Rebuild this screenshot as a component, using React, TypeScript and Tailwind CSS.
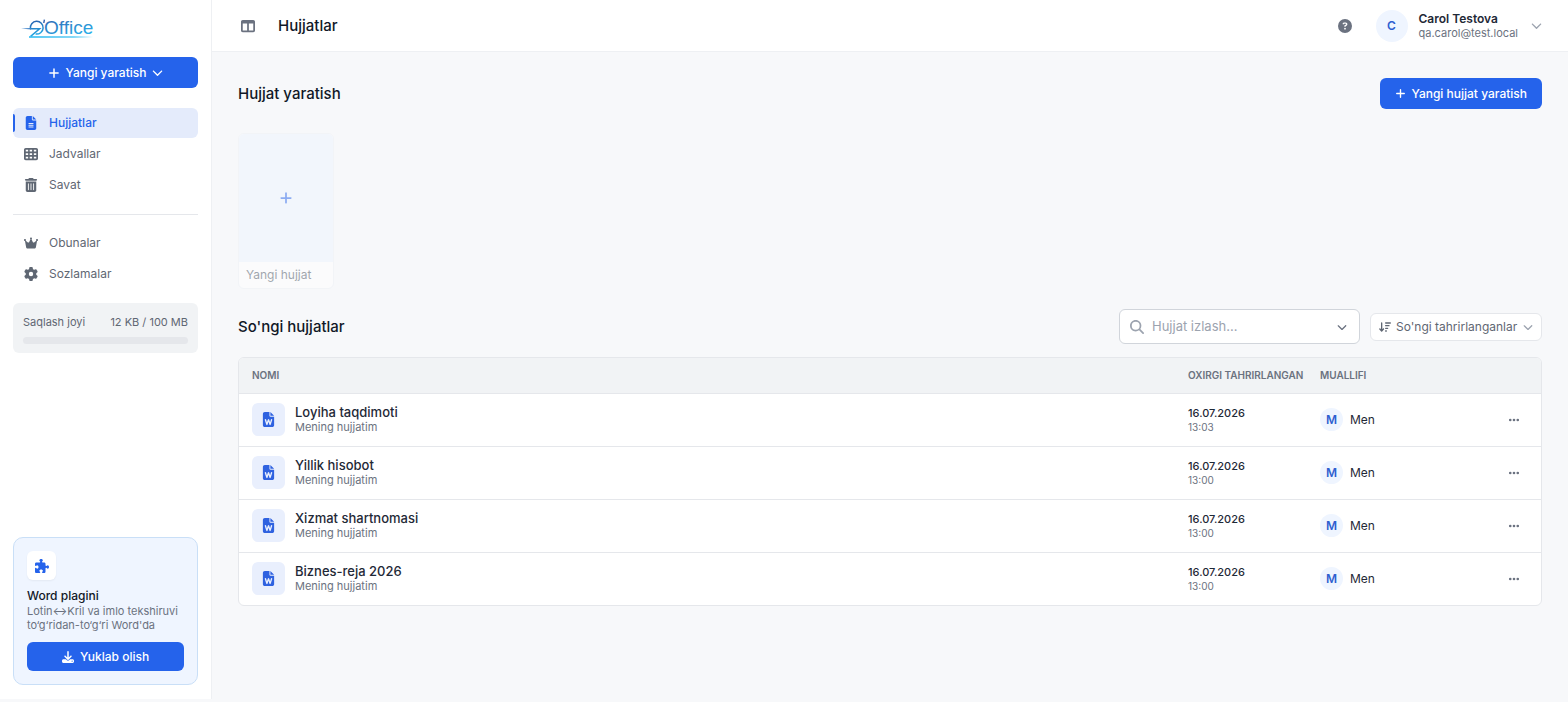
import {
  FaArrowDownWideShort,
  FaChevronDown,
  FaCircleQuestion,
  FaCrown,
  FaDownload,
  FaEllipsis,
  FaFileLines,
  FaFileWord,
  FaGear,
  FaMagnifyingGlass,
  FaPlus,
  FaPuzzlePiece,
  FaTableCells,
  FaTableColumns,
  FaTrashCan,
} from "react-icons/fa6";

const mainItems = [
  { id: "docs", label: "Hujjatlar", icon: FaFileLines, active: true },
  { id: "sheets", label: "Jadvallar", icon: FaTableCells, active: false },
  { id: "trash", label: "Savat", icon: FaTrashCan, active: false },
];

const secondaryItems = [
  { id: "plans", label: "Obunalar", icon: FaCrown, active: false },
  { id: "settings", label: "Sozlamalar", icon: FaGear, active: false },
];

const documents = [
  { id: 1, name: "Loyiha taqdimoti", date: "16.07.2026", time: "13:03" },
  { id: 2, name: "Yillik hisobot", date: "16.07.2026", time: "13:00" },
  { id: 3, name: "Xizmat shartnomasi", date: "16.07.2026", time: "13:00" },
  { id: 4, name: "Biznes-reja 2026", date: "16.07.2026", time: "13:00" },
];

const Logo = () => (
  <svg width="76" height="24" viewBox="0 0 76 24" role="img" aria-label="O'Office">
    <defs>
      <linearGradient id="logoText" x1="0" y1="0" x2="0.6" y2="1">
        <stop offset="0" stopColor="#2f5fae" />
        <stop offset="1" stopColor="#2bb0ea" />
      </linearGradient>
      <linearGradient id="logoMark" gradientUnits="userSpaceOnUse" x1="10" y1="4" x2="14" y2="22">
        <stop offset="0" stopColor="#2a5caa" />
        <stop offset="1" stopColor="#21b4ee" />
      </linearGradient>
      <linearGradient id="logoLine" gradientUnits="userSpaceOnUse" x1="8" y1="0" x2="72" y2="0">
        <stop offset="0" stopColor="#1fb6f0" />
        <stop offset="0.7" stopColor="#5ccbf4" />
        <stop offset="1" stopColor="#5ccbf4" stopOpacity="0" />
      </linearGradient>
    </defs>
    <g fill="none" stroke="url(#logoMark)" strokeWidth="1.5">
      <path d="M9.4 12.7A6.4 6.4 0 1 1 14.6 18" />
      <path d="M9 12.7H18.6L9.6 20.4" />
    </g>
    <path d="M0 12.6L10 12V13.4Z" fill="#3f83c9" />
    <path d="M8 21H72" stroke="url(#logoLine)" strokeWidth="1.4" />
    <path d="M23.4 3.6L22.8 7" stroke="#2f5fae" strokeWidth="1.4" />
    <text x="23" y="18" fontSize="19" fill="url(#logoText)" className="[font-family:'Liberation_Sans',sans-serif]">
      Office
    </text>
  </svg>
);

const NavList = ({ items }: { items: typeof mainItems }) => (
  <ul className="flex flex-col gap-px">
    {items.map(({ id, label, icon: Icon, active }) => (
      <li key={id}>
        <a
          href={`#${id}`}
          aria-current={active ? "page" : undefined}
          className={`relative flex h-[30px] items-center gap-[11px] rounded-md pl-[11px] text-xs ${
            active ? "bg-[#e4ebfb] font-medium text-[#2563eb]" : "text-[#5f6773] hover:bg-gray-50"
          }`}
        >
          {active && <span className="absolute left-0 top-1.5 h-[18px] w-0.5 rounded-r bg-[#2563eb]" />}
          <Icon className="size-3.5 shrink-0" />
          {label}
        </a>
      </li>
    ))}
  </ul>
);

const Sidebar = () => (
  <aside className="mb-[3px] flex w-[212px] shrink-0 flex-col border-r border-[#eef0f3] bg-white px-[13px] pb-3.5 pt-4">
    <a href="#home" className="ml-2 flex h-6">
      <Logo />
    </a>
    <button className="mt-[17px] flex h-[31px] items-center justify-center gap-1.5 rounded-md bg-[#2563eb] text-xs font-medium text-white">
      <FaPlus className="size-3" />
      Yangi yaratish
      <FaChevronDown className="size-[11px]" />
    </button>

    <nav className="mt-5">
      <NavList items={mainItems} />
      <hr className="mb-[13px] mt-3.5 border-[#e5e7eb]" />
      <NavList items={secondaryItems} />
    </nav>

    <section className="mt-3.5 h-[50px] rounded-md bg-[#f1f3f5] px-2.5 pt-[11px] text-[11px] leading-4 text-[#5f6773]">
      <div className="flex justify-between">
        <span>Saqlash joyi</span>
        <span>12 KB / 100 MB</span>
      </div>
      <div className="mt-[7px] h-[7px] rounded-full bg-[#e5e7eb]" />
    </section>

    <section className="mt-auto flex flex-col rounded-[10px] border border-[#c9dff7] bg-[#eff5ff] p-[13px]">
      <div className="flex size-[29px] items-center justify-center rounded-md bg-white text-[#2563eb] shadow-xs">
        <FaPuzzlePiece className="size-3.5" />
      </div>
      <h2 className="mt-2 text-xs font-medium leading-4 text-[#111827]">Word plagini</h2>
      <p className="text-[11px] leading-[14px] text-[#6b7280]">
        Lotin↔Kril va imlo tekshiruvi to‘g‘ridan-to‘g‘ri Word'da
      </p>
      <button className="mt-2.5 flex h-[29px] items-center justify-center gap-1.5 rounded-md bg-[#2563eb] text-xs font-medium text-white">
        <FaDownload className="size-3" />
        Yuklab olish
      </button>
    </section>
  </aside>
);

const Header = () => (
  <header className="flex h-[52px] items-center border-b border-[#eef0f3] bg-white pl-[29px] pr-[26px]">
    <button aria-label="Yon panel" className="text-[#6b7280]">
      <FaTableColumns className="size-3.5" />
    </button>
    <h1 className="ml-[23px] text-[15px] font-medium leading-5 text-[#111827]">Hujjatlar</h1>
    <button aria-label="Yordam" className="ml-auto text-[#6b7280]">
      <FaCircleQuestion className="size-3.5" />
    </button>
    <button className="ml-6 flex items-center gap-[11px] text-left">
      <span className="flex size-8 items-center justify-center rounded-full bg-[#eff5ff] text-xs font-semibold text-[#2f5fd0]">
        C
      </span>
      <span className="flex flex-col">
        <span className="text-xs font-semibold leading-[14px]">Carol Testova</span>
        <span className="text-[11px] leading-[14px] text-[#6b7280]">qa.carol@test.local</span>
      </span>
      <FaChevronDown className="ml-0.5 size-[11px] text-[#9ca3af]" />
    </button>
  </header>
);

const CreateSection = () => (
  <section>
    <div className="flex h-[31px] items-center justify-between">
      <h2 className="text-[15px] font-medium leading-5 text-[#111827]">Hujjat yaratish</h2>
      <button className="flex h-full items-center gap-1.5 rounded-md bg-[#2563eb] px-[15px] text-xs font-medium text-white">
        <FaPlus className="size-[11px]" />
        Yangi hujjat yaratish
      </button>
    </div>
    <button className="mt-6 flex w-24 flex-col overflow-hidden rounded-md border border-[#eef1f6] bg-white text-left opacity-50">
      <span className="flex h-32 w-full items-center justify-center bg-[#eff5ff] text-[#2563eb]">
        <FaPlus className="size-3.5" />
      </span>
      <span className="px-[7px] py-1 text-xs leading-[18px] text-[#4b5563]">Yangi hujjat</span>
    </button>
  </section>
);

const DocumentTable = () => (
  <div className="mt-[13px] overflow-hidden rounded-md border border-[#e5e7eb] bg-white">
    <table className="w-full table-fixed text-left text-xs">
      <thead className="bg-[#f1f3f5] text-[10px] text-[#6b7280]">
        <tr className="h-[35px]">
          <th className="pl-[13px] font-semibold">NOMI</th>
          <th className="w-[132px] font-semibold">OXIRGI TAHRIRLANGAN</th>
          <th className="w-[178px] font-semibold">MUALLIFI</th>
          <th className="w-[43px]" aria-label="Amallar" />
        </tr>
      </thead>
      <tbody>
        {documents.map((doc) => (
          <tr key={doc.id} className="h-[53px] border-t border-[#e5e7eb]">
            <td className="pl-[13px]">
              <div className="flex items-center gap-2.5">
                <span className="flex size-[33px] items-center justify-center rounded-md bg-[#e9effd] text-[#2f62e0]">
                  <FaFileWord className="size-[15px]" />
                </span>
                <div>
                  <div className="text-[13px] font-medium leading-4">{doc.name}</div>
                  <div className="text-[11px] leading-[15px] text-[#6b7280]">Mening hujjatim</div>
                </div>
              </div>
            </td>
            <td>
              <div className="text-[11px] font-medium leading-[15px]">{doc.date}</div>
              <div className="text-[10px] leading-3 text-[#6b7280]">{doc.time}</div>
            </td>
            <td>
              <div className="flex items-center gap-[7px]">
                <span className="flex size-[23px] items-center justify-center rounded-full bg-[#eff5ff] font-semibold text-[#2f5fd0]">
                  M
                </span>
                Men
              </div>
            </td>
            <td>
              <button aria-label={`${doc.name} amallari`} className="ml-2.5 flex text-[#6b7280]">
                <FaEllipsis className="size-3" />
              </button>
            </td>
          </tr>
        ))}
      </tbody>
    </table>
  </div>
);

const RecentSection = () => (
  <section className="mt-5">
    <div className="flex items-center gap-2.5">
      <h2 className="mr-auto text-[15px] font-medium leading-5 text-[#111827]">So'ngi hujjatlar</h2>
      <div className="flex h-[35px] w-[241px] items-center gap-2 rounded-md border border-[#d1d5db] bg-white px-2.5">
        <FaMagnifyingGlass className="size-3.5 shrink-0 text-[#9ca3af]" />
        <input
          type="search"
          aria-label="Hujjat izlash"
          placeholder="Hujjat izlash..."
          className="min-w-0 flex-1 text-[13px] outline-none placeholder:text-[#9ca3af]"
        />
        <button aria-label="Qidiruv sozlamalari" className="mr-0.5 text-[#6b7280]">
          <FaChevronDown className="size-2.5" />
        </button>
      </div>
      <label className="flex h-7 items-center gap-[5px] rounded-md border border-[#e5e7eb] bg-white px-2 text-[#5f6773]">
        <FaArrowDownWideShort className="size-3" />
        <select aria-label="Saralash" className="appearance-none text-xs outline-none">
          <option>So'ngi tahrirlanganlar</option>
          <option>Nomi bo'yicha</option>
        </select>
        <FaChevronDown className="size-2.5 text-[#9ca3af]" />
      </label>
    </div>
    <DocumentTable />
  </section>
);

export default function App() {
  return (
    <div className="flex min-h-screen bg-[#f7f8fa] text-[#1f2937] [font-family:Inter,'Liberation_Sans',sans-serif]">
      <Sidebar />
      <div className="flex min-w-0 flex-1 flex-col">
        <Header />
        <main className="px-[26px] pb-6 pt-[26px]">
          <CreateSection />
          <RecentSection />
        </main>
      </div>
    </div>
  );
}
